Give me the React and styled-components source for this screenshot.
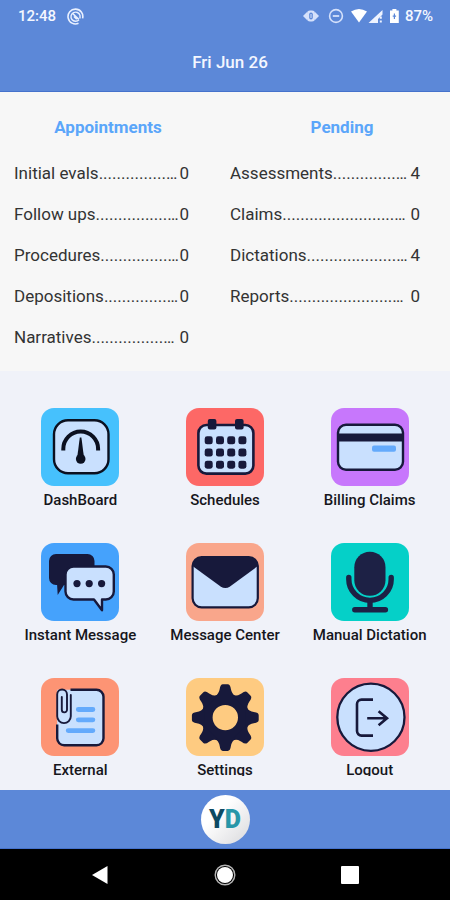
import React from "react";
import styled, { createGlobalStyle } from "styled-components";

const GlobalStyle = createGlobalStyle`
  * {
    box-sizing: border-box;
  }

  body {
    margin: 0;
    background: #f0f2f9;
    font-family: Roboto, "Liberation Sans", sans-serif;
  }

  button {
    font-family: inherit;
    border: 0;
    padding: 0;
    background: none;
    cursor: pointer;
  }
`;

const Page = styled.div`
  display: flex;
  flex-direction: column;
  height: 100vh;
`;

const Header = styled.header`
  flex: none;
  background: #5c88d8;
  border-bottom: 1px solid #4572cc;
  color: #f4f7ff;
`;

const StatusBar = styled.div`
  display: flex;
  justify-content: space-between;
  align-items: center;
  height: 32px;
  padding: 0 17px 0 18px;
  font-size: 15px;
  font-weight: 500;
`;

const StatusGroup = styled.div`
  display: flex;
  align-items: center;
  gap: ${(props) => props.$gap}px;

  svg {
    display: block;
  }
`;

const Title = styled.h1`
  margin: 0;
  padding: 18px 0 17px 10px;
  font-size: 17px;
  line-height: 24px;
  font-weight: 500;
  text-align: center;
`;

const Summary = styled.section`
  flex: none;
  display: grid;
  grid-template-columns: minmax(0, 216fr) minmax(0, 220fr);
  column-gap: 14px;
  padding: 25px 0 24px;
  background: #f7f7f7;
`;

const SummaryTitle = styled.h2`
  margin: 0 0 26px;
  padding-left: ${(props) => props.$indent || 0}px;
  font-size: 17px;
  line-height: 20px;
  font-weight: 700;
  text-align: center;
  color: #5ba6fa;
`;

const SummaryList = styled.ul`
  list-style: none;
  margin: 0;
  padding: ${(props) => props.$pad};
  display: flex;
  flex-direction: column;
  gap: 21px;
`;

const SummaryRow = styled.li`
  display: flex;
  justify-content: space-between;
  font-size: 17px;
  line-height: 20px;
  white-space: nowrap;
  color: #333333;
`;

const Menu = styled.main`
  flex: 1;
  min-height: 0;
  display: flex;
  padding-bottom: 14px;
`;

const MenuScroll = styled.div`
  flex: 1;
  overflow-y: auto;
  scrollbar-width: none;
`;

const MenuGrid = styled.div`
  display: grid;
  grid-template-columns: repeat(3, 1fr);
  row-gap: 33px;
  padding: 37px 8px 0;
`;

const MenuItem = styled.button`
  display: flex;
  flex-direction: column;
  align-items: center;
  gap: 4px;
  font-size: 15px;
  line-height: 20px;
  font-weight: 500;
  white-space: nowrap;
  color: #16161c;
`;

const Tile = styled.span`
  width: 78px;
  height: 78px;
  border-radius: 13px;
  background: ${(props) => props.$color};

  svg {
    display: block;
  }
`;

const Footer = styled.footer`
  flex: none;
  display: flex;
  justify-content: center;
  align-items: center;
  height: 59px;
  background: #5c88d8;
  border-bottom: 1px solid #4572cc;
`;

const Brand = styled.button`
  width: 49px;
  height: 49px;
  border-radius: 50%;
  background: linear-gradient(135deg, #ffffff 35%, #d9d9dc);
  font-size: 25px;
  font-weight: 900;
  line-height: 49px;
  color: #0d4a63;

  span {
    color: #2796a8;
  }
`;

const SystemNav = styled.nav`
  flex: none;
  display: grid;
  grid-template-columns: repeat(3, 1fr);
  height: 51px;
  padding: 0 37px;
  background: #000000;
`;

const NavButton = styled.button`
  display: flex;
  justify-content: center;
  align-items: center;
`;

const INK = "#17193b";
const PALE = "#c9e0fe";
const SKY = "#64aafc";

const Icon = ({ children }) => (
  <svg width="78" height="78" viewBox="0 0 78 78" fill="none" aria-hidden="true">
    {children}
  </svg>
);

const DashboardIcon = () => (
  <Icon>
    <rect x="13" y="12.2" width="54.5" height="53" rx="14" fill={PALE} stroke="#0b1020" strokeWidth="2.4" />
    <path d="M22.3 42.5v-1.5a17.4 17.4 0 0 1 34.8 0v1.5" stroke="#0b1020" strokeWidth="4" />
    <path d="M38.8 29.5h1.6l2.6 20h-6.8z" fill="#0b1020" />
    <circle cx="39.7" cy="51" r="4.8" fill="#0b1020" />
  </Icon>
);

const CalendarIcon = () => (
  <Icon>
    <rect x="12.4" y="17" width="55" height="48.6" rx="8" fill={PALE} stroke={INK} strokeWidth="2.6" />
    <rect x="21.8" y="11" width="8.6" height="10.4" rx="2" fill={INK} />
    <rect x="49" y="11" width="8.6" height="10.4" rx="2" fill={INK} />
    {[32.3, 44.6, 56.7].map((y) =>
      [22.7, 34, 45.2, 56.4].map((x) => (
        <rect key={`${x}-${y}`} x={x - 4} y={y - 4} width="8" height="8" rx="2.4" fill={INK} />
      ))
    )}
  </Icon>
);

const CardIcon = () => (
  <Icon>
    <rect x="7" y="16.8" width="65" height="45" rx="8" fill={PALE} stroke={INK} strokeWidth="2.4" />
    <rect x="7" y="25.5" width="65" height="8" fill={INK} />
    <rect x="41" y="37.4" width="24" height="6.4" rx="2" fill={SKY} />
  </Icon>
);

const ChatIcon = () => (
  <Icon>
    <path d="M15 11h31.5a7 7 0 0 1 7 7v17a7 7 0 0 1-7 7H23l-6.3 10-.6-10H15a7 7 0 0 1-7-7V18a7 7 0 0 1 7-7z" fill={INK} />
    <path
      d="M32.5 23.5h32.3a8 8 0 0 1 8 8v17a8 8 0 0 1-8 8H61v10.7L53 56.5H32.5a8 8 0 0 1-8-8v-17a8 8 0 0 1 8-8z"
      fill={PALE}
      stroke={INK}
      strokeWidth="2.4"
      strokeLinejoin="round"
    />
    <circle cx="36" cy="40.6" r="3.6" fill={INK} />
    <circle cx="48.2" cy="40.6" r="3.6" fill={INK} />
    <circle cx="60.6" cy="40.6" r="3.6" fill={INK} />
  </Icon>
);

const MailIcon = () => (
  <Icon>
    <rect x="6.6" y="14.1" width="65.2" height="50.2" rx="9" fill={PALE} stroke={INK} strokeWidth="2.2" />
    <path d="M6.5 23a9 9 0 0 1 9-9h47.4a9 9 0 0 1 9 9L44 43.4q-4.6 3-9.4 0z" fill={INK} />
  </Icon>
);

const MicIcon = () => (
  <Icon>
    <rect x="23.3" y="8.7" width="31.2" height="44" rx="15.5" fill="#1d2145" />
    <path d="M17.8 34.5v1.7a21.2 21.2 0 0 0 42.4 0v-1.7" stroke="#1d2145" strokeWidth="5.4" strokeLinecap="round" />
    <path d="M39 56v10" stroke="#1d2145" strokeWidth="5.4" />
    <path d="M23.8 66.8h30.6" stroke="#1d2145" strokeWidth="5.4" strokeLinecap="round" />
  </Icon>
);

const ClipIcon = () => (
  <Icon>
    <path d="M16.2 11.8h39.3a7 7 0 0 1 7 7v41.5a7 7 0 0 1-7 7H23.2a7 7 0 0 1-7-7z" fill={PALE} />
    <path d="M29.5 11.8h26a7 7 0 0 1 7 7v41.5a7 7 0 0 1-7 7H23.2a7 7 0 0 1-7-7V46.5" stroke={INK} strokeWidth="2.4" />
    <path
      d="M29.8 17v21.3a6.8 6.8 0 0 1-13.6 0V16.4a4.9 4.9 0 0 1 9.8 0v15.4a2.6 2.6 0 0 1-5.2 0V19"
      stroke={INK}
      strokeWidth="1.9"
      strokeLinecap="round"
    />
    <path d="M37.3 31.5h14.6M37.3 41.8h14.6M27.2 52.6h24.7" stroke={SKY} strokeWidth="4.8" strokeLinecap="round" />
  </Icon>
);

const GearIcon = () => (
  <Icon>
    <g transform="translate(39.3 39.6)">
      <circle r="18.4" stroke={INK} strokeWidth="11.4" />
      {[0, 45, 90, 135, 180, 225, 270, 315].map((angle) => (
        <path
          key={angle}
          transform={`rotate(${angle})`}
          d="M-10.6 -20.5Q-6.3 -24 -5.6 -28.5Q-5 -33.4 -2.4 -33.4H2.4Q5 -33.4 5.6 -28.5Q6.3 -24 10.6 -20.5Z"
          fill={INK}
        />
      ))}
    </g>
  </Icon>
);

const LogoutIcon = () => (
  <Icon>
    <circle cx="39.9" cy="39.3" r="33.6" fill={PALE} stroke={INK} strokeWidth="2.3" />
    <path
      d="M42 21.6H30.5a4.5 4.5 0 0 0-4.5 4.5v27a4.5 4.5 0 0 0 4.5 4.5H42M36.2 40.2h19.6M47.6 33.2l8.4 7-8.4 7"
      stroke={INK}
      strokeWidth="2.6"
    />
  </Icon>
);

const menuItems = [
  { label: "DashBoard", color: "#46c1fd", icon: DashboardIcon },
  { label: "Schedules", color: "#fd6866", icon: CalendarIcon },
  { label: "Billing Claims", color: "#c777fc", icon: CardIcon },
  { label: "Instant Message", color: "#45a2fc", icon: ChatIcon },
  { label: "Message Center", color: "#f9a68b", icon: MailIcon },
  { label: "Manual Dictation", color: "#05d0c8", icon: MicIcon },
  { label: "External", color: "#fd9474", icon: ClipIcon },
  { label: "Settings", color: "#fecb81", icon: GearIcon },
  { label: "Logout", color: "#fd7f8e", icon: LogoutIcon },
];

// label, number of leader dots, value
const appointments = [
  ["Initial evals", 15, 0],
  ["Follow ups", 16, 0],
  ["Procedures", 15, 0],
  ["Depositions", 14, 0],
  ["Narratives", 16, 0],
];

const pending = [
  ["Assessments", 14, 4],
  ["Claims", 25, 0],
  ["Dictations", 20, 4],
  ["Reports", 23, 0],
];

const SummaryColumn = ({ title, rows, pad, indent }) => (
  <div>
    <SummaryTitle $indent={indent}>{title}</SummaryTitle>
    <SummaryList $pad={pad}>
      {rows.map(([label, dots, value]) => (
        <SummaryRow key={label}>
          <span>
            {label}
            {".".repeat(dots)}…
          </span>
          <span>{value}</span>
        </SummaryRow>
      ))}
    </SummaryList>
  </div>
);

const StatusIcons = () => (
  <svg width="96" height="18" viewBox="0 0 96 18" fill="none" aria-hidden="true">
    {/* eye */}
    <path d="M0 9l4-4v8zM16 9l-4-4v8z" fill="#d5e1fb" />
    <rect x="4" y="3.4" width="8" height="11.2" rx="3" fill="#d5e1fb" />
    <rect x="6.2" y="5.4" width="3.6" height="7.2" rx="1.8" fill="#5c88d8" />
    <path d="M8 7v4" stroke="#d5e1fb" strokeWidth="1" />
    {/* do not disturb */}
    <circle cx="33" cy="9" r="6.4" stroke="#d5e1fb" strokeWidth="1.6" />
    <path d="M29.8 9h6.4" stroke="#d5e1fb" strokeWidth="1.8" />
    {/* wifi */}
    <path d="M48 4.6q8-5 16 0L56 15.5z" fill="#ffffff" />
    {/* signal */}
    <path d="M65.5 16L79.5 3v4.5L75 12v4z" fill="#eef3ff" />
    <path d="M77.8 9.5v2.2M77.8 13.6v2" stroke="#eef3ff" strokeWidth="2" />
    {/* battery */}
    <path d="M87 3.5h2.4V2h4v1.5h2.4V16H87V3.5z" fill="#ffffff" />
    <path d="M91.4 6.4v5.6M89.7 9.2h3.4" stroke="#5c88d8" strokeWidth="1.2" />
  </svg>
);

const App = () => {
  return (
    <Page>
      <GlobalStyle />
      <Header>
        <StatusBar>
          <StatusGroup $gap={11}>
            <span>12:48</span>
            <svg width="17" height="17" viewBox="0 0 17 17" fill="none" aria-hidden="true">
              <path d="M11.5 15.3A7.4 7.4 0 1 1 15.6 10.4" stroke="#e9f0ff" strokeWidth="1.6" />
              <path d="M12 11.8A4.6 4.6 0 1 1 13 7.4v3.2" stroke="#e9f0ff" strokeWidth="1.4" />
              <path d="M5.4 5.2l6.4 6.2M7 8.4l2.8 2.8" stroke="#e9f0ff" strokeWidth="1.6" />
            </svg>
          </StatusGroup>
          <StatusGroup $gap={6}>
            <StatusIcons />
            <span>87%</span>
          </StatusGroup>
        </StatusBar>
        <Title>Fri Jun 26</Title>
      </Header>

      <Summary>
        <SummaryColumn title="Appointments" rows={appointments} pad="0 27px 0 14px" />
        <SummaryColumn title="Pending" rows={pending} pad="0 30px 0 0" indent={4} />
      </Summary>

      <Menu>
        <MenuScroll>
          <MenuGrid>
            {menuItems.map(({ label, color, icon: TileIcon }) => (
              <MenuItem key={label} type="button">
                <Tile $color={color}>
                  <TileIcon />
                </Tile>
                <span>{label}</span>
              </MenuItem>
            ))}
          </MenuGrid>
        </MenuScroll>
      </Menu>

      <Footer>
        <Brand type="button">
          Y<span>D</span>
        </Brand>
      </Footer>

      <SystemNav>
        <NavButton type="button" aria-label="Back">
          <svg width="18" height="18" viewBox="0 0 18 18">
            <path d="M1 9L16.5 0v18z" fill="#ffffff" />
          </svg>
        </NavButton>
        <NavButton type="button" aria-label="Home">
          <svg width="22" height="22" viewBox="0 0 22 22">
            <circle cx="11" cy="11" r="9.8" fill="none" stroke="#b5b5b5" strokeWidth="1.4" />
            <circle cx="11" cy="11" r="8" fill="#ffffff" />
          </svg>
        </NavButton>
        <NavButton type="button" aria-label="Recent apps">
          <svg width="18" height="18" viewBox="0 0 18 18">
            <rect width="18" height="18" rx="1" fill="#ffffff" />
          </svg>
        </NavButton>
      </SystemNav>
    </Page>
  );
};

export default App;
